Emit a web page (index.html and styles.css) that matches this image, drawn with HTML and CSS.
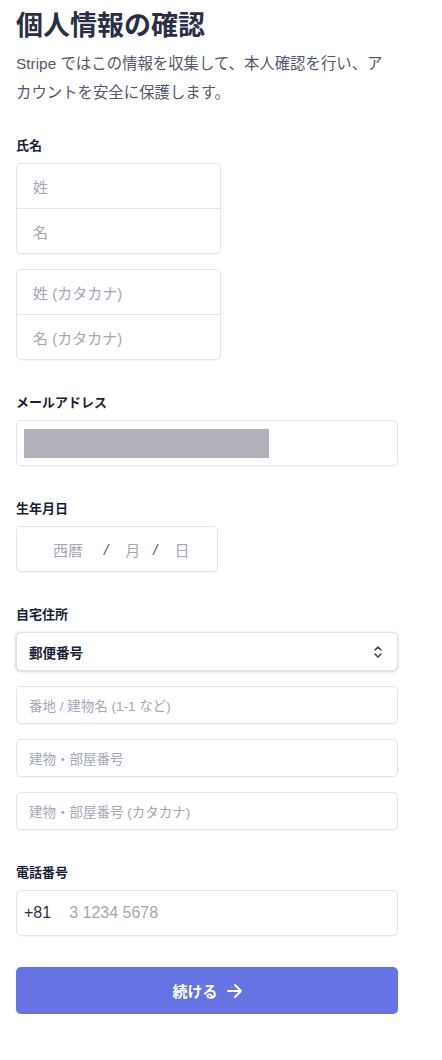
FILE: index.html
```html
<!DOCTYPE html>
<html lang="ja">
<head>
<meta charset="utf-8">
<link rel="stylesheet" href="styles.css">
</head>
<body>
<main class="page">
  <h1 class="title">個人情報の確認</h1>
  <p class="subtitle">Stripe ではこの情報を収集して、本人確認を行い、アカウントを安全に保護します。</p>

  <section class="field first">
    <div class="label">氏名</div>
    <div class="group narrow">
      <div class="box tall"><span class="ph">姓</span></div>
      <div class="box tall"><span class="ph">名</span></div>
    </div>
    <div class="group narrow second">
      <div class="box tall"><span class="ph">姓 (カタカナ)</span></div>
      <div class="box tall"><span class="ph">名 (カタカナ)</span></div>
    </div>
  </section>

  <section class="field">
    <div class="label">メールアドレス</div>
    <div class="box tall email"><span class="redact"></span></div>
  </section>

  <section class="field">
    <div class="label">生年月日</div>
    <div class="box tall dob">
      <span class="ph yr">西暦</span>
      <span class="slash">/</span>
      <span class="ph">月</span>
      <span class="slash">/</span>
      <span class="ph">日</span>
    </div>
  </section>

  <section class="field">
    <div class="label">自宅住所</div>
    <div class="box select">
      <span class="sel-text">郵便番号</span>
      <svg class="chev" width="10" height="14" viewBox="0 0 10 14"><path d="M2 5 L5 2 L8 5 M2 9 L5 12 L8 9" fill="none" stroke="#3c4257" stroke-width="1.5" stroke-linecap="round" stroke-linejoin="round"/></svg>
    </div>
    <div class="box short"><span class="ph sm">番地 / 建物名 (1-1 など)</span></div>
    <div class="box short"><span class="ph sm">建物・部屋番号</span></div>
    <div class="box short"><span class="ph sm">建物・部屋番号 (カタカナ)</span></div>
  </section>

  <section class="field">
    <div class="label">電話番号</div>
    <div class="box tall phone">
      <span class="cc">+81</span>
      <span class="ph num">3 1234 5678</span>
    </div>
  </section>

  <button class="btn" type="button">
    <span>続ける</span>
    <svg width="18" height="16" viewBox="0 0 18 16"><path d="M2 8 H15 M9 2 L15 8 L9 14" fill="none" stroke="#fff" stroke-width="2" stroke-linecap="round" stroke-linejoin="round"/></svg>
  </button>
</main>
</body>
</html>
```

FILE: styles.css
```css
* { box-sizing: border-box; }
html, body { margin: 0; padding: 0; background: #fff; }
body {
  font-family: "Liberation Sans", "Noto Sans CJK JP", sans-serif;
  color: #1a1f36;
}
.page {
  width: 382px;
  margin-left: 16px;
  padding-top: 7px;
}
.title {
  margin: 0;
  font-size: 27px;
  line-height: 34px;
  font-weight: 700;
  color: #2a2f45;
  font-family: "Noto Sans CJK JP", sans-serif;
}
.subtitle {
  margin: 8px 0 0;
  width: 376px;
  font-size: 15.4px;
  line-height: 29px;
  color: #545969;
}
.field { margin-top: 34px; }
.field.first { margin-top: 30px; }
.label {
  font-size: 13px;
  line-height: 18px;
  font-weight: 700;
  color: #1a1f36;
  margin-bottom: 8px;
}
.group { display: flex; flex-direction: column; }
.group.narrow { width: 205px; }
.group.second { margin-top: 15px; }
.group .box + .box { margin-top: -1px; }
.group .box:first-child { border-radius: 5px 5px 0 0; }
.group .box:last-child { border-radius: 0 0 5px 5px; }
.box {
  display: flex;
  align-items: center;
  border: 1px solid #e3e5ea;
  border-radius: 5px;
  background: #fff;
  box-shadow: 0 1px 1px rgba(0, 0, 0, 0.03);
}
.box.tall { height: 46px; padding-left: 16px; }
.box.short { height: 38px; padding-left: 12px; margin-top: 15px; }
.ph {
  font-size: 15px;
  color: #a3a8b5;
}
.ph.sm { font-size: 13.5px; }
.email { padding-left: 7px !important; }
.redact {
  display: block;
  width: 245px;
  height: 29px;
  background: #b1b1b9;
}
.dob { width: 202px; padding-left: 36px !important; }
.dob .slash {
  font-size: 15px;
  color: #4f566b;
  font-style: italic;
  margin-right: 17px;
}
.dob .ph { margin-right: 13px; }
.dob .ph.yr { margin-right: 21px; }
.select {
  height: 39px;
  padding: 0 12px;
  justify-content: space-between;
  border-color: #e0e2e7;
  box-shadow: 0 1px 3px rgba(0, 0, 0, 0.14), -1px 0 2px rgba(0, 0, 0, 0.08);
}
.sel-text {
  font-size: 13.5px;
  font-weight: 700;
  color: #1a1f36;
}
.chev { display: block; margin-right: 2px; }
.phone { padding-left: 7px !important; }
.cc {
  font-size: 16px;
  color: #30313d;
  margin-right: 18px;
}
.num { font-size: 16px; }
.btn {
  margin-top: 31px;
  width: 382px;
  height: 47px;
  border: 0;
  border-radius: 5px;
  background: #6772e3;
  color: #fff;
  display: flex;
  align-items: center;
  justify-content: center;
  gap: 8px;
  font-family: "Noto Sans CJK JP", sans-serif;
  font-size: 15px;
  font-weight: 700;
  box-shadow: 0 1px 2px rgba(0, 0, 0, 0.12);
  padding: 0 0 0 2px;
}
.btn svg { display: block; }
```
